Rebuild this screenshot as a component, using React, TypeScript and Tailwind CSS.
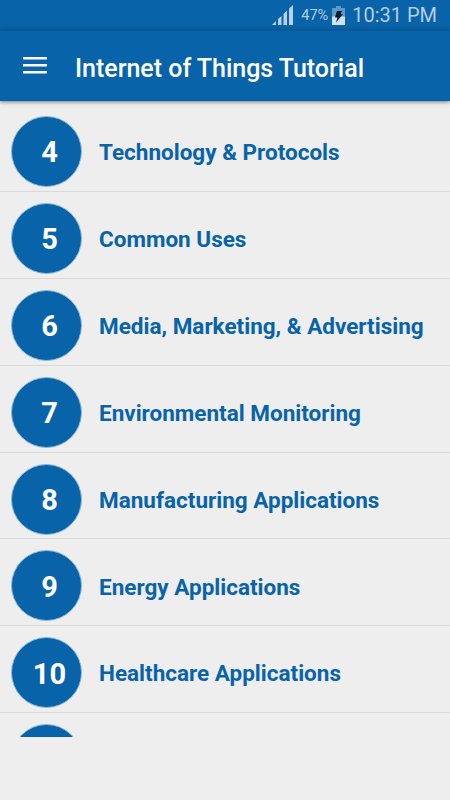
import React from 'react';

const chapters = [
    { number: 4, title: 'Technology & Protocols' },
    { number: 5, title: 'Common Uses' },
    { number: 6, title: 'Media, Marketing, & Advertising' },
    { number: 7, title: 'Environmental Monitoring' },
    { number: 8, title: 'Manufacturing Applications' },
    { number: 9, title: 'Energy Applications' },
    { number: 10, title: 'Healthcare Applications' },
];

function SignalIcon() {
    return (
        <svg width="21" height="20" viewBox="0 0 21 20" fill="#b9d0e4">
            <path d="M0 20l4-4v4zM6 20v-6l3.5-3v9zM11.5 20V9L15 5.5V20zM17 20V3.5L21 0v20z" />
        </svg>
    );
}

function BatteryIcon() {
    return (
        <svg width="13" height="19" viewBox="0 0 13 19">
            <path d="M4 0h5v2h4v9H0V2h4z" fill="#5c9bc8" />
            <path d="M0 10.5h13V19H0z" fill="#d0e2f1" />
            <path d="M5 5h5L8.5 8.5 11 8 4 16.5l1.5-5H3z" fill="#0a1c2b" />
        </svg>
    );
}

export default function App() {
    return (
        <div className="flex h-[800px] w-[450px] flex-col overflow-hidden bg-[#eeeeee] font-[Roboto,sans-serif]">
            {/* Status bar */}
            <div className="flex h-[30px] shrink-0 items-center justify-end bg-[#0863a8] pr-[13px] text-[#b5cde1]">
                <SignalIcon />
                <span className="ml-2 mr-1 pt-[2px] text-[14.5px]">47%</span>
                <BatteryIcon />
                <span className="ml-[7px] text-[20px]">10:31 PM</span>
            </div>

            {/* App bar */}
            <div className="z-10 flex h-[71px] shrink-0 items-center border-t border-[#075a99] bg-[#0863a8] pl-[23px] text-white shadow-[0_1px_4px_rgba(0,0,0,0.5)]">
                <svg className="-mt-[2px]" width="24" height="17" viewBox="0 0 24 17" fill="currentColor">
                    <path d="M0 0h24v2.5H0zM0 7h24v2.5H0zM0 14h24v2.5H0z" />
                </svg>
                <h1 className="ml-7 pt-[5px] text-[25px] font-medium tracking-[-0.02px]">Internet of Things Tutorial</h1>
            </div>

            {/* Chapter list */}
            <ul className="h-[636px] shrink-0 overflow-hidden pt-[4px]">
                {chapters.map((chapter) => (
                    <li key={chapter.number} className="flex h-[86.9px] items-center border-b border-[#d9d9d9] pl-[11px] pt-[7px]">
                        <div className="flex size-[71px] items-center justify-center rounded-full border border-[#8dbadb] bg-[#0863a8] pl-[6px] pt-[3px] text-[29px] font-bold text-white">
                            {chapter.number}
                        </div>
                        <span className="ml-[17px] pt-[3px] text-[22.5px] font-bold text-[#0863a8]">{chapter.title}</span>
                    </li>
                ))}
                <li className="pl-[11px] pt-[11px]">
                    <div className="size-[71px] rounded-full border border-[#8dbadb] bg-[#0863a8]" />
                </li>
            </ul>
        </div>
    );
}
